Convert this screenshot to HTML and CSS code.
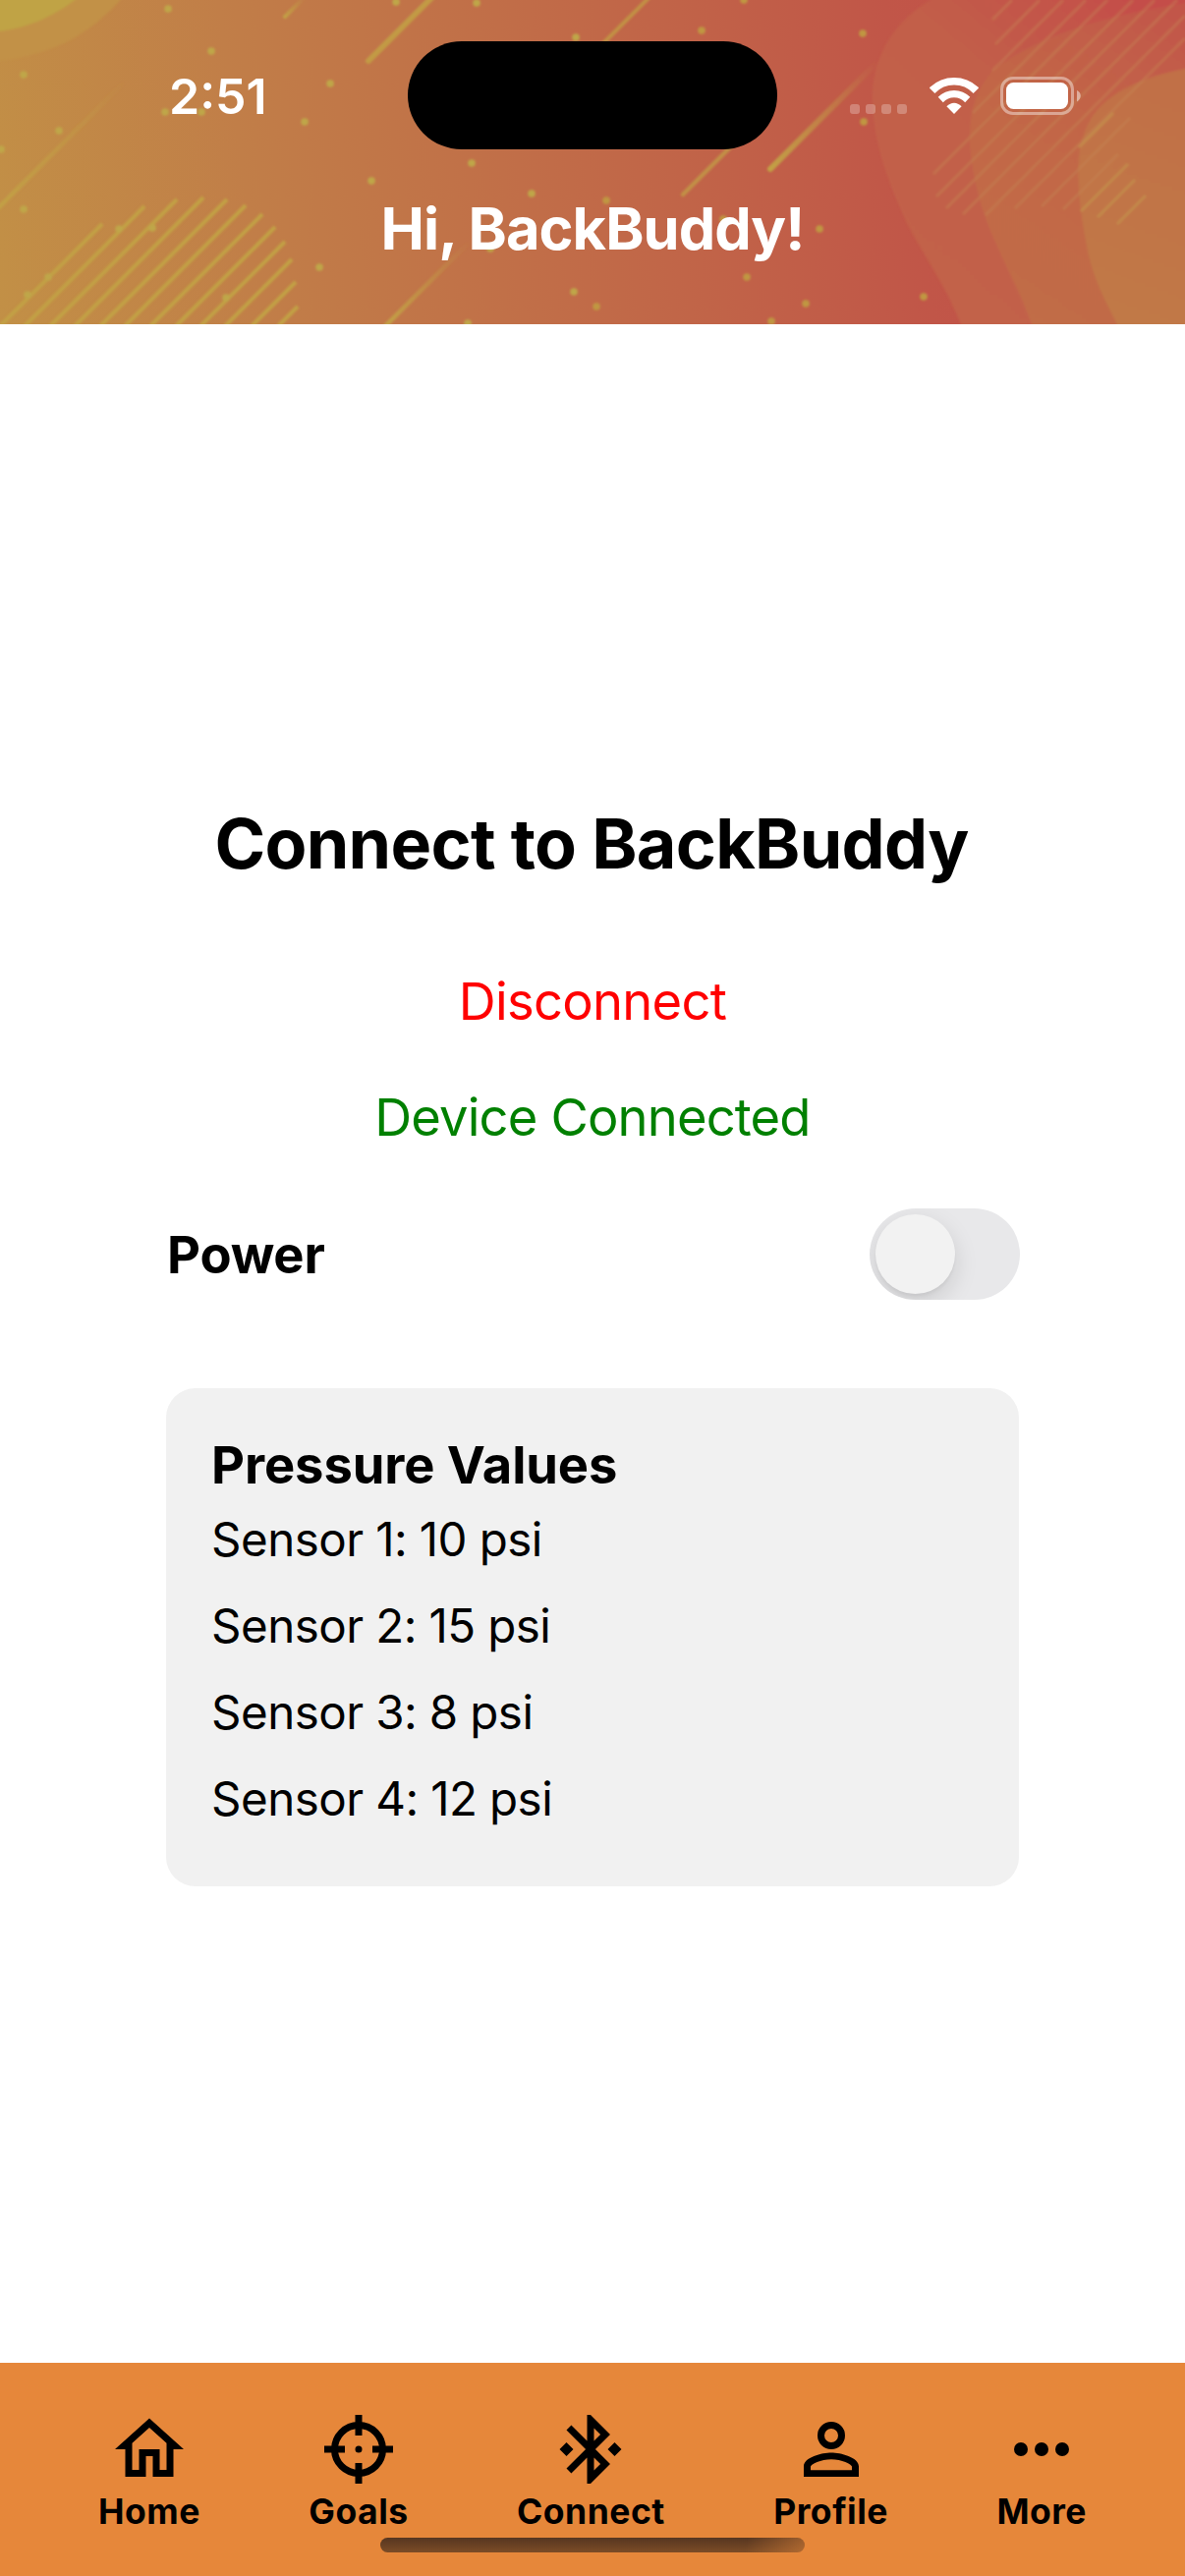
FILE: index.html
```html
<!DOCTYPE html>
<html lang="en">
<head>
<meta charset="utf-8">
<title>BackBuddy</title>
<link rel="stylesheet" href="styles.css">
</head>
<body>
<div class="screen">
  <header class="header">
    <svg class="header-art" viewBox="0 0 1206 330" aria-hidden="true">
      <defs>
        <linearGradient id="base" x1="0" y1="330" x2="1206" y2="150" gradientUnits="userSpaceOnUse">
          <stop offset="0" stop-color="#c29046"/>
          <stop offset=".22" stop-color="#c17e48"/>
          <stop offset=".42" stop-color="#c17048"/>
          <stop offset=".6" stop-color="#c16348"/>
          <stop offset=".77" stop-color="#c15648"/>
          <stop offset="1" stop-color="#c44c49"/>
        </linearGradient>
        <linearGradient id="wave1" x1="900" y1="300" x2="1150" y2="0" gradientUnits="userSpaceOnUse">
          <stop offset="0" stop-color="#c26348"/>
          <stop offset=".6" stop-color="#c25f48"/>
          <stop offset="1" stop-color="#c44e4a"/>
        </linearGradient>
        <linearGradient id="wave2" x1="1010" y1="300" x2="1200" y2="20" gradientUnits="userSpaceOnUse">
          <stop offset="0" stop-color="#c16d47"/>
          <stop offset=".6" stop-color="#c26547"/>
          <stop offset="1" stop-color="#c25749"/>
        </linearGradient>
        <linearGradient id="wave3" x1="1110" y1="330" x2="1206" y2="70" gradientUnits="userSpaceOnUse">
          <stop offset="0" stop-color="#c17a47"/>
          <stop offset="1" stop-color="#c16f47"/>
        </linearGradient>
        <linearGradient id="fade" x1="0" y1="1" x2="1" y2="0">
          <stop offset="0" stop-color="#c2a045"/>
          <stop offset="1" stop-color="#c2a045" stop-opacity="0"/>
        </linearGradient>
        <filter id="soft" x="0" y="0" width="1" height="1"><feGaussianBlur stdDeviation=".9"/></filter>
      </defs>
      <rect width="1206" height="330" fill="url(#base)"/>
      <g filter="url(#soft)">
        <rect width="1206" height="330" fill="none"/>
        <path d="M-9 -9H130C92 38 48 58 -9 63Z" fill="#c29146"/>
        <path d="M-9 -9H88C52 20 27 29 -9 33Z" fill="#c0a345"/>
        <path d="M947 -9V0C905 24 886 66 888 105C890 150 904 184 923 227C944 267 962 290 978 330V340H1216V-9Z" fill="url(#wave1)"/>
        <path d="M1216 2C1130 14 1060 34 1010 72C980 108 982 150 1000 213C1012 250 1036 290 1050 330V340H1216Z" fill="url(#wave2)"/>
        <path d="M1216 68C1160 78 1130 94 1112 118C1092 150 1094 190 1108 260C1114 286 1126 308 1137 330V340H1216Z" fill="url(#wave3)"/>
        <g stroke="#c2a045" stroke-width="4" fill="none">
          <path d="M0 332L104 228M25 332L147 210M51 332L180 203M76 332L207 201M102 332L231 203M127 332L250 209M153 332L267 218M179 332L280 231M204 332L290 246M229 332L297 264M256 332L301 287M283 332L303 312"/>
        </g>
        <g stroke="#c68a56" stroke-opacity=".38" stroke-width="3" fill="none">
          <path d="M1010 20L1030 0M1013 45L1058 0M1010 72L1082 0M990 115L1105 0M950 177L1127 0M953 200L1153 0M963 212L1175 0M980 218L1198 0M1003 219L1206 16M1033 212L1206 39M1060 210L1150 120M1082 213L1138 157"/>
          <path d="M1100 215L1148 167M1117 221L1155 183M1137 228L1166 199M1098 150L1133 115" stroke="#c4964c" stroke-opacity=".6"/>
        </g>
        <g fill="none" stroke="url(#fade)" stroke-linecap="round">
          <path d="M-2 212L127 83" stroke-width="4.5"/>
          <path d="M290 17L310 -3" stroke-width="4"/>
          <path d="M392 332L478 246" stroke-width="4.5"/>
          <path d="M784 172L893 63" stroke-width="6"/>
        </g>
        <g fill="none" stroke="#c29a45" stroke-linecap="round">
          <path d="M375 62L440 -3" stroke-width="6"/>
          <path d="M614 44L661 -3" stroke-width="4" stroke-opacity=".8"/>
          <path d="M695 198L745 148" stroke-width="4.5" stroke-opacity=".8"/>
        </g>
        <g fill="none" stroke="#bfa649" stroke-width="7.5" stroke-linecap="round">
          <path d="M171 9h.1M215 52h.1M24 76h.1M60 133h.1M1 152h.1M24 213h.1M168 114h.1M205 114h.1M336 85h.1M310 124h.1M403 2h.1M485 3h.1M586 38h.1M480 166h.1M378 184h.1M541 197h.1M325 272h.1M584 297h.1M499 253h.1M476 329h.1M121 233h.1M155 232h.1M49 282h.1M28 300h.1M230 303h.1"/>
          <path stroke="#c09642" d="M714 31h.1M757 0h.1M878 34h.1M879 124h.1M617 204h.1M736 223h.1M834 233h.1M760 282h.1M940 302h.1M820 309h.1M607 312h.1M785 327h.1"/>
        </g>
      </g>
    </svg>
    <div class="status-bar">
      <div class="clock">2:51</div>
      <div class="island"></div>
      <div class="status-icons">
        <svg class="signal" viewBox="0 0 58 10" aria-hidden="true">
          <g fill="#fff" fill-opacity=".26"><rect width="10" height="10" rx="3"/><rect x="16" width="10" height="10" rx="3"/><rect x="32" width="10" height="10" rx="3"/><rect x="48" width="10" height="10" rx="3"/></g>
        </svg>
        <svg class="wifi" viewBox="0 0 50 37" aria-hidden="true">
          <g fill="#fff">
            <path d="M25 37L17.4 29.3Q21 25.7 25 25.7T32.600 29.3Z"/>
            <path d="M13.800 25.200L8.700 19.800Q15.500 12.900 25 12.900T41.300 19.800L36.200 25.200Q31.500 20.300 25 20.300T13.800 25.200Z"/>
            <path d="M5.400 16L.3 10.900Q-.2 10.300.4 9.700Q11 0 25 0T49.600 9.700Q50.200 10.300 49.700 10.900L44.600 16Q36.500 7.600 25 7.600T5.400 16Z"/>
          </g>
        </svg>
        <svg class="battery" viewBox="0 0 82 39" aria-hidden="true">
          <rect x="1.500" y="1.500" width="72" height="36" rx="11.500" fill="none" stroke="#fff" stroke-opacity=".42" stroke-width="3"/>
          <rect x="6" y="6" width="63" height="27" rx="7.500" fill="#fff"/>
          <path d="M78 14C83 16 83 23 78 25.500Z" fill="#fff" fill-opacity=".48"/>
        </svg>
      </div>
    </div>
    <h1 class="greeting">Hi, BackBuddy!</h1>
  </header>

  <main class="content">
    <h2 class="title">Connect to BackBuddy</h2>
    <button class="disconnect">Disconnect</button>
    <p class="device-status">Device Connected</p>
    <div class="power-row">
      <span class="power-label">Power</span>
      <span class="switch"><span class="knob"></span></span>
    </div>
    <section class="card">
      <h3 class="card-title">Pressure Values</h3>
      <ul class="sensors">
        <li>Sensor 1: 10 psi</li>
        <li>Sensor 2: 15 psi</li>
        <li>Sensor 3: 8 psi</li>
        <li>Sensor 4: 12 psi</li>
      </ul>
    </section>
  </main>

  <nav class="tabs">
    <a class="tab">
      <svg viewBox="0 0 24 24" aria-hidden="true"><path d="M12 5.690L17 10.190V18H15V12H9V18H7V10.190L12 5.690M12 3L2 12H5V20H11V14H13V20H19V12H22"/></svg>
      <span>Home</span>
    </a>
    <a class="tab">
      <svg viewBox="0 0 24 24" aria-hidden="true"><circle cx="12" cy="12" r="7" fill="none" stroke="#000" stroke-width="2"/><path d="M11 2h2v6h-2zM11 16h2v6h-2zM2 11h6v2H2zM16 11h6v2h-6z"/><circle cx="12" cy="12" r="1"/></svg>
      <span>Goals</span>
    </a>
    <a class="tab">
      <svg viewBox="0 0 24 24" aria-hidden="true"><path d="M19,10L17,12L19,14L21,12M14.880,16.290L13,18.170V14.410M13,5.830L14.880,7.710L13,9.580M17.710,7.710L12,2H11V9.580L6.410,5L5,6.410L10.590,12L5,17.580L6.410,19L11,14.410V22H12L17.710,16.290L13.410,12M7,12L5,10L3,12L5,14L7,12Z"/></svg>
      <span>Connect</span>
    </a>
    <a class="tab">
      <svg viewBox="0 0 24 24" aria-hidden="true"><path d="M12,4A4,4 0 0,1 16,8A4,4 0 0,1 12,12A4,4 0 0,1 8,8A4,4 0 0,1 12,4M12,6A2,2 0 0,0 10,8A2,2 0 0,0 12,10A2,2 0 0,0 14,8A2,2 0 0,0 12,6M12,13C14.670,13 20,14.330 20,17V20H4V17C4,14.330 9.330,13 12,13M12,14.900C9.030,14.900 6,16.360 6,17V18.100H18V17C18,16.360 14.970,14.900 12,14.900Z"/></svg>
      <span>Profile</span>
    </a>
    <a class="tab">
      <svg viewBox="0 0 24 24" aria-hidden="true"><circle cx="6" cy="12" r="2"/><circle cx="12" cy="12" r="2"/><circle cx="18" cy="12" r="2"/></svg>
      <span>More</span>
    </a>
    <div class="home-indicator"></div>
  </nav>
</div>
</body>
</html>
```

FILE: styles.css
```css
* { box-sizing: border-box; margin: 0; padding: 0; }

body {
  background: #fff;
  color: #000;
  font-family: Inter, "Liberation Sans", sans-serif;
}

.screen {
  width: 1206px;
  height: 2622px;
  display: flex;
  flex-direction: column;
  overflow: hidden;
}

/* Header */
.header {
  position: relative;
  height: 330px;
  flex: none;
  color: #fff;
}
.header-art {
  position: absolute;
  inset: 0;
  width: 1206px;
  height: 330px;
}
.status-bar {
  position: relative;
  display: grid;
  grid-template-columns: 415px 376px 1fr;
  height: 194px;
}
.clock {
  padding-left: 172px;
  padding-top: 66px;
  font-size: 50px;
  line-height: 64px;
  font-weight: 600;
}
.island {
  margin-top: 42px;
  height: 110px;
  border-radius: 55px;
  background: #000;
}
.status-icons {
  display: flex;
  align-items: flex-start;
  padding-left: 74px;
}
.signal { width: 58px; height: 10px; margin-top: 106px; }
.wifi { width: 50px; height: 37px; margin: 79px 0 0 23px; }
.battery { width: 82px; height: 39px; margin: 78px 0 0 22px; }
.greeting {
  position: relative;
  text-align: center;
  font-size: 59.5px;
  line-height: 76px;
  letter-spacing: -.95px;
  font-weight: 700;
}

/* Content */
.content {
  flex: 1;
  display: flex;
  flex-direction: column;
  align-items: stretch;
  width: 868px;
  margin-left: 169px;
  padding-top: 486px;
}
.title {
  text-align: center;
  padding-right: 2px;
  font-size: 70px;
  line-height: 86px;
  letter-spacing: -.7px;
  font-weight: 700;
}
.disconnect {
  margin-top: 85px;
  border: 0;
  background: none;
  font: 400 52.5px/64px Inter, "Liberation Sans", sans-serif;
  letter-spacing: -.7px;
  color: #ff0000;
}
.device-status {
  margin-top: 54px;
  text-align: center;
  font-size: 52.5px;
  line-height: 64px;
  letter-spacing: -.85px;
  color: #008000;
}
.power-row {
  display: flex;
  justify-content: space-between;
  align-items: center;
  margin-top: 61px;
  height: 93px;
}
.power-label {
  padding-left: 1px;
  font-size: 52.5px;
  line-height: 64px;
  letter-spacing: -.2px;
  font-weight: 700;
}
.switch {
  width: 153px;
  height: 93px;
  margin-right: -1px;
  padding: 6px;
  border-radius: 46.5px;
  background: #e8e8ea;
  overflow: hidden;
}
.knob {
  display: block;
  width: 81px;
  height: 81px;
  border-radius: 50%;
  background: #f2f2f2;
  box-shadow: 0 9px 24px rgba(0, 0, 0, .13), 0 3px 3px rgba(0, 0, 0, .04);
}
.card {
  margin-top: 90px;
  height: 507px;
  padding: 46px 46px 45px;
  border-radius: 30px;
  background: #f1f1f1;
}
.card-title {
  font-size: 52.5px;
  line-height: 64px;
  letter-spacing: -.1px;
  font-weight: 700;
}
.sensors {
  list-style: none;
  font-size: 47.5px;
  line-height: 88px;
  letter-spacing: -.5px;
  word-spacing: -.3px;
}

/* Tab bar */
.tabs {
  position: relative;
  height: 217px;
  flex: none;
  display: flex;
  justify-content: space-between;
  padding: 45px 100px 0 100px;
  background: #e6873a;
}
.tab {
  display: flex;
  flex-direction: column;
  align-items: center;
}
.tab svg { width: 84px; height: 84px; margin-top: .5px; }
.tab span {
  font-size: 35.5px;
  line-height: 43px;
  letter-spacing: .5px;
  font-weight: 700;
  white-space: nowrap;
}
.home-indicator {
  position: absolute;
  left: 387px;
  top: 178px;
  width: 432px;
  height: 15px;
  border-radius: 7.5px;
  background:
    linear-gradient(100deg, transparent 86%, rgba(230, 135, 58, .5) 100%),
    linear-gradient(#563620, #7c4c27);
}
```
